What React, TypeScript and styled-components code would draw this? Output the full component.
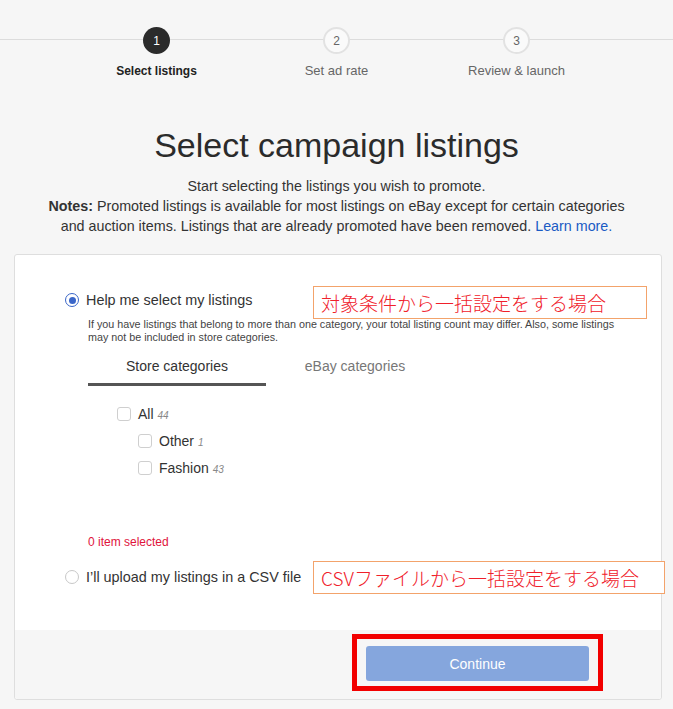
import React from "react";
import styled, { createGlobalStyle } from "styled-components";

const GlobalStyle = createGlobalStyle`
  html, body { margin: 0; padding: 0; }
  body {
    background: #f6f6f6;
    font-family: "Liberation Sans", Arial, sans-serif;
    color: #333;
  }
  * { box-sizing: border-box; }
`;

const Page = styled.div`
  width: 673px;
  height: 709px;
  overflow: hidden;
  display: flex;
  flex-direction: column;
`;

const Stepper = styled.div`
  position: relative;
  display: grid;
  grid-template-columns: repeat(3, 180px);
  justify-content: center;
  padding-top: 27px;
  &::before {
    content: "";
    position: absolute;
    left: 0;
    right: 0;
    top: 39px;
    height: 1px;
    background: #dcdcdc;
  }
`;

const Step = styled.div`
  position: relative;
  display: flex;
  flex-direction: column;
  align-items: center;
`;

const StepCircle = styled.div<{ $active?: boolean }>`
  width: 27px;
  height: 27px;
  border-radius: 50%;
  display: flex;
  align-items: center;
  justify-content: center;
  font-size: 12px;
  background: ${(p) => (p.$active ? "#2b2b2b" : "#fafafa")};
  color: ${(p) => (p.$active ? "#fff" : "#666")};
  border: ${(p) => (p.$active ? "none" : "2px solid #e2e2e2")};
`;

const StepLabel = styled.div<{ $active?: boolean }>`
  margin-top: 9px;
  font-size: ${(p) => (p.$active ? "12px" : "13px")};
  line-height: 16px;
  color: ${(p) => (p.$active ? "#222" : "#666")};
  font-weight: ${(p) => (p.$active ? 700 : 400)};
`;

const Title = styled.h1`
  margin: 46px 0 0;
  text-align: center;
  font-size: 34px;
  line-height: 40px;
  font-weight: 400;
  color: #2b2b2b;
`;

const Intro = styled.p`
  margin: 11px 0 0;
  text-align: center;
  font-size: 14.3px;
  line-height: 20px;
  color: #333;
`;

const Link = styled.a`
  color: #1a5bc4;
  text-decoration: none;
`;

const Card = styled.div`
  position: relative;
  margin: 18px 11px 0 14px;
  height: 446px;
  background: #fff;
  border: 1px solid #dedede;
  border-radius: 3px;
  display: flex;
  flex-direction: column;
`;

const CardBody = styled.div`
  flex: 1;
  padding: 35px 0 0 50px;
`;

const RadioRow = styled.label`
  display: flex;
  align-items: center;
  gap: 7px;
  height: 20px;
  font-size: 14.4px;
  color: #333;
`;

const Radio = styled.span<{ $checked?: boolean }>`
  width: 14px;
  height: 14px;
  border-radius: 50%;
  border: 1.5px solid ${(p) => (p.$checked ? "#3a66c8" : "#c8c8c8")};
  display: flex;
  align-items: center;
  justify-content: center;
  &::after {
    content: "";
    width: 7px;
    height: 7px;
    border-radius: 50%;
    background: ${(p) => (p.$checked ? "#3a66c8" : "transparent")};
  }
`;

const Indent = styled.div`
  padding-left: 23px;
`;

const Help = styled.p`
  margin: 8px 0 0;
  width: 540px;
  font-size: 10.75px;
  line-height: 13px;
  color: #444;
`;

const Tabs = styled.div`
  display: flex;
  margin-top: 4px;
`;

const Tab = styled.div<{ $active?: boolean }>`
  width: 178px;
  height: 38px;
  padding-top: 10px;
  text-align: center;
  font-size: 14px;
  line-height: 16px;
  color: ${(p) => (p.$active ? "#333" : "#777")};
  border-bottom: 3px solid ${(p) => (p.$active ? "#555" : "transparent")};
`;

const CheckList = styled.div`
  display: flex;
  flex-direction: column;
  gap: 12px;
  margin-top: 20px;
`;

const CheckRow = styled.div<{ $level: number }>`
  display: flex;
  align-items: center;
  gap: 7px;
  height: 15px;
  padding-left: ${(p) => 29 + p.$level * 21}px;
  font-size: 14px;
  color: #333;
`;

const Box = styled.span`
  width: 14px;
  height: 14px;
  border: 1px solid #cfcfcf;
  border-radius: 3px;
  background: #fff;
`;

const Count = styled.span`
  font-size: 10px;
  font-style: italic;
  color: #888;
  margin-left: -3px;
  padding-top: 3px;
`;

const Selected = styled.div`
  margin-top: 60px;
  font-size: 12px;
  line-height: 14px;
  color: #e0143c;
`;

const SecondOption = styled.div`
  margin-top: 18px;
`;

const Footer = styled.div`
  height: 69px;
  background: #f6f6f6;
  display: flex;
  justify-content: flex-end;
  padding: 4px 58px 0 0;
  border-radius: 0 0 3px 3px;
`;

const Highlight = styled.div`
  border: 5px solid #f20000;
  padding: 7px 9px 4px;
  height: 57px;
`;

const Button = styled.button`
  width: 223px;
  height: 35px;
  border: none;
  border-radius: 3px;
  background: #85a6dd;
  color: #fff;
  font-family: "Liberation Sans", Arial, sans-serif;
  font-size: 14px;
`;

const Note = styled.div<{ $top: number; $width: number }>`
  position: absolute;
  left: 298px;
  top: ${(p) => p.$top}px;
  width: ${(p) => p.$width}px;
  height: 33px;
  padding-left: 7px;
  display: flex;
  align-items: center;
  background: #fff;
  border: 1px solid #f3a36b;
  color: #f0202a;
  font-family: "Noto Sans CJK JP", "Noto Sans", sans-serif;
  font-size: 19px;
  font-weight: 300;
  white-space: nowrap;
`;

const steps = ["Select listings", "Set ad rate", "Review & launch"];

export default function App() {
  return (
    <Page>
      <GlobalStyle />
      <Stepper>
        {steps.map((s, i) => (
          <Step key={s}>
            <StepCircle $active={i === 0}>{i + 1}</StepCircle>
            <StepLabel $active={i === 0}>{s}</StepLabel>
          </Step>
        ))}
      </Stepper>
      <Title>Select campaign listings</Title>
      <Intro>
        Start selecting the listings you wish to promote.
        <br />
        <strong>Notes:</strong> Promoted listings is available for most listings on eBay except for certain categories
        <br />
        and auction items. Listings that are already promoted have been removed. <Link href="#">Learn more.</Link>
      </Intro>
      <Card>
        <CardBody>
          <RadioRow>
            <Radio $checked />
            Help me select my listings
          </RadioRow>
          <Indent>
            <Help>
              If you have listings that belong to more than one category, your total listing count may differ. Also, some listings
              may not be included in store categories.
            </Help>
            <Tabs>
              <Tab $active>Store categories</Tab>
              <Tab>eBay categories</Tab>
            </Tabs>
            <CheckList>
              <CheckRow $level={0}>
                <Box />
                All <Count>44</Count>
              </CheckRow>
              <CheckRow $level={1}>
                <Box />
                Other <Count>1</Count>
              </CheckRow>
              <CheckRow $level={1}>
                <Box />
                Fashion <Count>43</Count>
              </CheckRow>
            </CheckList>
            <Selected>0 item selected</Selected>
          </Indent>
          <SecondOption>
            <RadioRow>
              <Radio />
              I’ll upload my listings in a CSV file
            </RadioRow>
          </SecondOption>
        </CardBody>
        <Footer>
          <Highlight>
            <Button>Continue</Button>
          </Highlight>
        </Footer>
        <Note $top={31} $width={334}>対象条件から一括設定をする場合</Note>
        <Note $top={306} $width={352}>CSVファイルから一括設定をする場合</Note>
      </Card>
    </Page>
  );
}
